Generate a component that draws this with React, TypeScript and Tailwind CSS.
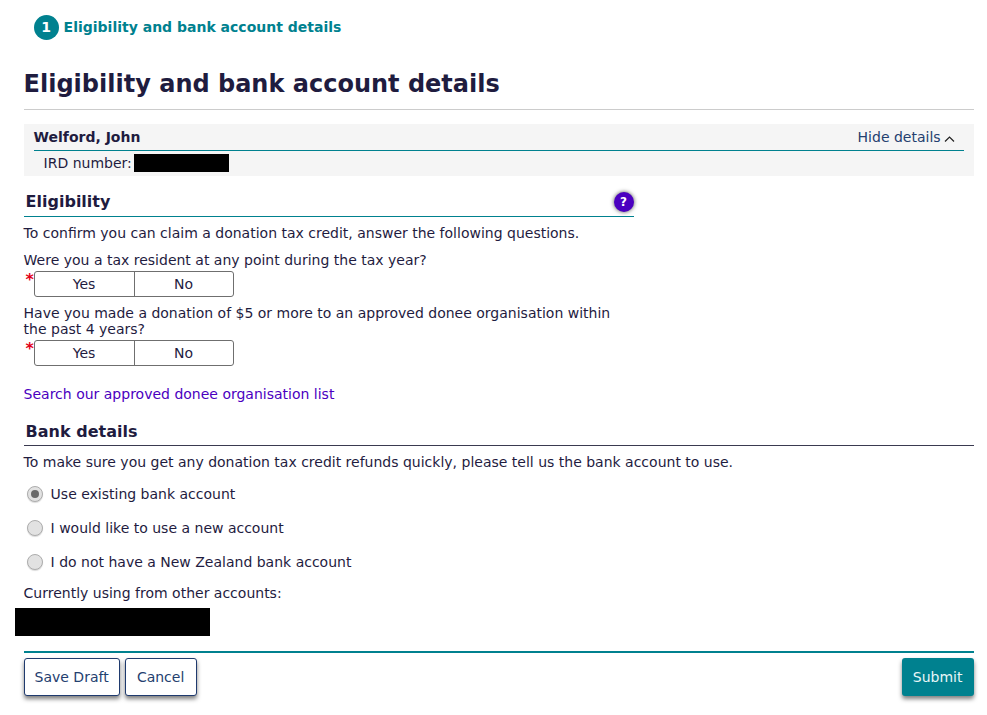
import React from 'react';

function YesNo() {
  return (
    <div className="relative ml-[10px] flex h-[26px] w-[200px] rounded-[3px] border border-[#6f6f6f] bg-white">
      <span className="absolute left-[-9px] top-0 text-[16px] font-bold leading-[16px] text-[#e2001a]">*</span>
      <button className="h-full w-[100px] border-r border-[#6f6f6f] pb-[1px] text-center leading-[22px]">Yes</button>
      <button className="h-full flex-1 pb-[1px] text-center leading-[22px]">No</button>
    </div>
  );
}

function Radio({ label, checked }: { label: string; checked?: boolean }) {
  return (
    <div className="flex h-[34px] items-center">
      <span className="ml-[3px] flex h-[16px] w-[16px] items-center justify-center rounded-full border border-[#adadad] bg-[#e2e2e2] shadow-[0_1px_1px_rgba(0,0,0,0.15)]">
        {checked && <span className="h-[8px] w-[8px] rounded-full bg-[#6a6a6a]" />}
      </span>
      <span className="ml-[8px]">{label}</span>
    </div>
  );
}

export default function App() {
  return (
    <div className="h-[715px] w-[987px] overflow-hidden bg-white pl-[23.6px] pr-[13.4px] font-['DejaVu_Sans',sans-serif] text-[14px] leading-[16px] text-[#1f1c3f]">
      {/* step indicator */}
      <div className="flex items-center pl-[10px] pt-[15px]">
        <span className="flex h-[25px] w-[25px] items-center justify-center rounded-full bg-[#00818f] pb-[1px] text-[14px] font-bold text-white">1</span>
        <span className="ml-[5px] pb-[2px] text-[14px] font-bold text-[#00818f]">Eligibility and bank account details</span>
      </div>

      <h1 className="mt-[15px] h-[55px] border-b border-[#cccccc] pt-[15px] text-[24px] font-bold leading-[28px]">
        Eligibility and bank account details
      </h1>

      {/* person panel */}
      <div className="mt-[14px] h-[52px] w-[950px] bg-[#f5f5f5] px-[10px]">
        <div className="flex h-[27px] items-center justify-between border-b border-[#00818f]">
          <span className="font-bold">Welford, John</span>
          <span className="flex items-center pr-[9px] text-[#24406f]">
            Hide details
            <svg className="ml-[3px] mt-[3px] h-[8px] w-[11px]" viewBox="0 0 11 8" fill="none" stroke="#222222" strokeWidth="1.2">
              <path d="M1 6.5 L5.5 2 L10 6.5" />
            </svg>
          </span>
        </div>
        <div className="flex h-[25px] items-center pb-[1px] pl-[10px]">
          IRD number:
          <span className="ml-[2px] h-[18px] w-[95px] bg-black" />
        </div>
      </div>

      {/* eligibility */}
      <div className="w-[610px]">
        <div className="relative mt-[15px] h-[26px] border-b border-[#00818f] pl-[2px] pt-[1px] text-[16px] font-bold leading-[20px]">
          Eligibility
          <span className="absolute right-0 top-[1px] flex h-[20px] w-[20px] items-center justify-center rounded-full bg-[#4b00c0] text-[12px] font-bold text-white shadow-[0_0_4px_rgba(0,0,0,0.7)]">?</span>
        </div>
        <p className="mt-[8px]">To confirm you can claim a donation tax credit, answer the following questions.</p>
        <p className="mt-[11px] mb-[3px]">Were you a tax resident at any point during the tax year?</p>
        <YesNo />
        <p className="mt-[8px] mb-[3px]">Have you made a donation of $5 or more to an approved donee organisation within the past 4 years?</p>
        <YesNo />
        <p className="mt-[20px] text-[#4b00c0]">Search our approved donee organisation list</p>
      </div>

      {/* bank details */}
      <div className="mt-[18px] h-[26px] border-b border-[#3a3a50] pl-[2px] pt-[2px] text-[16px] font-bold leading-[20px]">Bank details</div>
      <p className="mt-[8px]">To make sure you get any donation tax credit refunds quickly, please tell us the bank account to use.</p>
      <div className="mt-[7px]">
        <Radio label="Use existing bank account" checked />
        <Radio label="I would like to use a new account" />
        <Radio label="I do not have a New Zealand bank account" />
      </div>
      <p className="mt-[6px]">Currently using from other accounts:</p>
      <div className="ml-[-9px] mt-[7px] h-[28px] w-[195px] bg-black" />

      {/* actions */}
      <div className="mt-[15px] flex h-[47px] justify-between border-t-2 border-[#00818f] pt-[5px]">
        <div className="flex gap-[5px]">
          <button className="h-[38px] w-[96px] rounded-[3px] border border-[#1f3a6e] bg-white pb-[1px] text-[#24406f] shadow-[0_3px_4px_rgba(0,0,0,0.5)]">Save Draft</button>
          <button className="h-[38px] w-[72px] rounded-[3px] border border-[#1f3a6e] bg-white pb-[1px] text-[#24406f] shadow-[0_3px_4px_rgba(0,0,0,0.5)]">Cancel</button>
        </div>
        <button className="h-[38px] w-[72px] rounded-[3px] bg-[#00818f] pb-[1px] text-[#e8f6f7] shadow-[0_3px_4px_rgba(0,0,0,0.5)]">Submit</button>
      </div>
    </div>
  );
}
